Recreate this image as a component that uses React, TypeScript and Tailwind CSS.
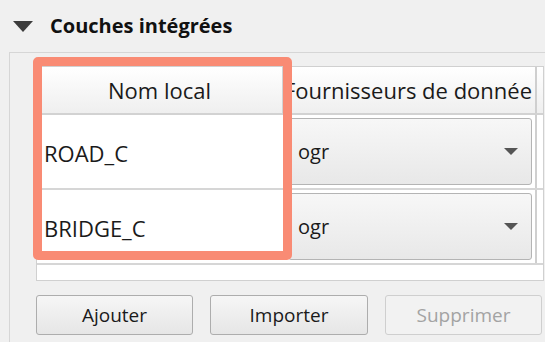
import React from 'react';

const rows = ['ROAD_C', 'BRIDGE_C'];

function Combo({ value }: { value: string }) {
  return (
    <div className="flex-1 flex items-center justify-between h-full rounded-[3px] border border-[#b4b4b4] bg-gradient-to-b from-[#f7f7f7] to-[#e8e8e8] pl-[9px] pr-[13px]">
      <span className="text-[20px] text-[#1a1a1a]">{value}</span>
      <svg width="14" height="8" viewBox="0 0 14 8">
        <polygon points="0,0 14,0 7,7" fill="#555" />
      </svg>
    </div>
  );
}

export default function App() {
  return (
    <div className="relative w-[545px] h-[342px] overflow-hidden bg-[#f0f0f0] font-['Open_Sans',sans-serif] text-[#1a1a1a]">
      {/* section title */}
      <div className="flex items-center h-[52px] pl-[13px] gap-[17px]">
        <svg width="20" height="11" viewBox="0 0 20 11">
          <polygon points="0,0 20,0 10,11" fill="#3c3c3c" />
        </svg>
        <span className="text-[20px] font-bold text-[#111]">Couches intégrées</span>
      </div>

      {/* group box */}
      <div className="ml-[9px] h-[290px] border-l border-t border-[#d6d6d6] pl-[26px] pt-[13px]">
        <div className="w-[508px] h-[215px] border border-[#d0d0d0] bg-white flex flex-col">
          {/* header */}
          <div className="flex h-[48px] border-b-2 border-[#d2d2d2] bg-gradient-to-b from-white to-[#efefef]">
            <div className="w-[246px] flex items-center justify-center border-r border-[#d2d2d2] text-[22px]">
              Nom local
            </div>
            <div className="w-[254px] flex items-center overflow-hidden whitespace-nowrap border-r-2 border-[#cfcfcf] pl-[1px] text-[22px]">
              Fournisseurs de donnée
            </div>
            <div className="flex-1" />
          </div>

          {rows.map((name) => (
            <div key={name} className="flex h-[75px] border-b-2 border-[#d6d6d6]">
              <div className="w-[246px] flex items-center pl-[7px] pt-[3px] text-[22px]">{name}</div>
              <div className="w-[254px] flex py-[3px] pl-[5px] pr-[3px] border-r-2 border-[#cfcfcf]">
                <Combo value="ogr" />
              </div>
              <div className="flex-1" />
            </div>
          ))}
          <div className="flex-1" />
        </div>

        {/* buttons */}
        <div className="flex mt-[14px] gap-[17px]">
          <button className="w-[157px] h-[40px] rounded-[3px] border border-[#adadad] bg-gradient-to-b from-[#f6f6f6] to-[#e6e6e6] text-[19px] text-[#1a1a1a]">
            Ajouter
          </button>
          <button className="w-[158px] h-[40px] rounded-[3px] border border-[#adadad] bg-gradient-to-b from-[#f6f6f6] to-[#e6e6e6] text-[19px] text-[#1a1a1a]">
            Importer
          </button>
          <button className="w-[157px] h-[40px] rounded-[3px] border border-[#cfcfcf] bg-[#f2f2f2] text-[19px] text-[#a3a3a3]">
            Supprimer
          </button>
        </div>
      </div>

      {/* highlight annotation */}
      <div className="absolute left-[33px] top-[57px] w-[259px] h-[203px] rounded-[5px] border-[9px] border-[#f98b74]" />
    </div>
  );
}
